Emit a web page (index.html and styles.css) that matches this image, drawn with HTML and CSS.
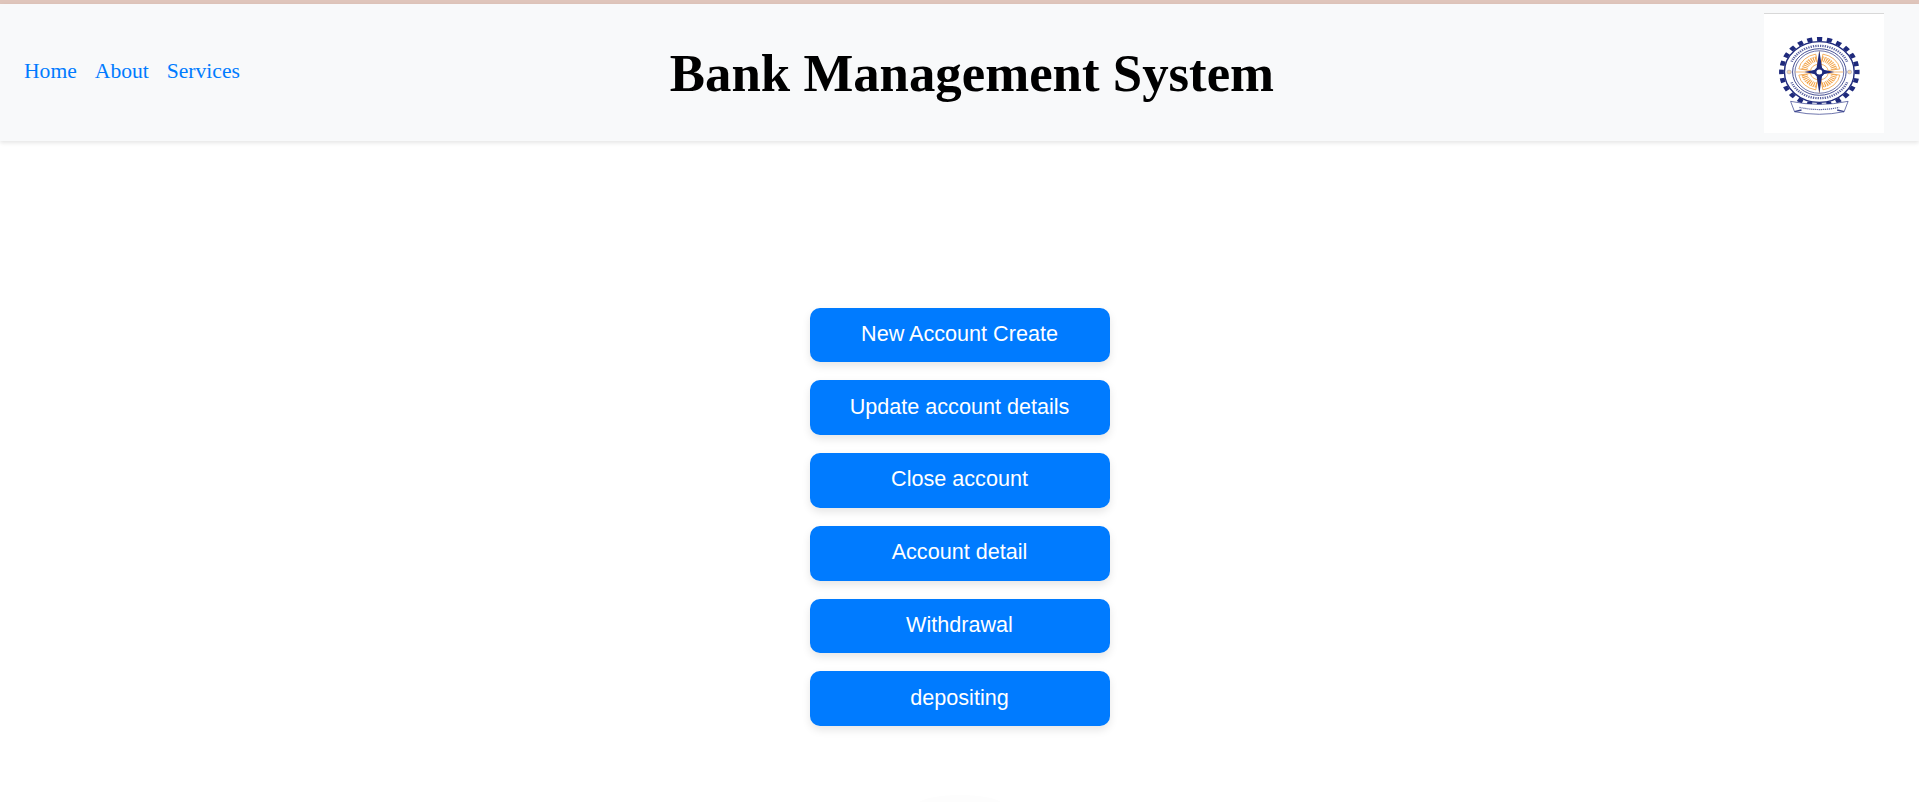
FILE: index.html
```html
<!DOCTYPE html>
<html lang="en">
<head>
    <meta charset="UTF-8">
    <meta name="viewport" content="width=device-width, initial-scale=1.0">
    <title>Bank Management System</title>
    <link rel="stylesheet" href="styles.css">
</head>
<body>
    <div class="top-strip"></div>
    <header class="site-header">
        <nav class="site-nav">
            <a href="#">Home</a>
            <a href="#">About</a>
            <a href="#">Services</a>
        </nav>
        <h1 class="site-title">Bank Management System</h1>
        <div class="logo-box">
            <svg class="logo" viewBox="0 0 120 120" width="120" height="119" aria-label="Institute logo">
                <defs>
                    <g id="fan" fill="none" stroke="#f2a144" stroke-width=".9">
                        <path d="M3.6 -20.7A21 21 0 0 1 20.7 -3.6"/>
                        <path d="M2.6 -14.8A15 15 0 0 1 14.8 -2.6" stroke-width="5.5" stroke-dasharray="1.1 1"/>
                        <path d="M3.1 -17.7A18 18 0 0 1 17.7 -3.1" stroke-dasharray="2 1"/>
                        <path d="M1.6 -8.9A9 9 0 0 1 8.9 -1.6"/>
                        <path d="M3.6 -20.7L1.6 -8.9M20.7 -3.6L8.9 -1.6"/>
                    </g>
                </defs>
                <g class="logo-art" transform="translate(55.3 58.5) scale(1 .87)">
                    <circle r="38.2" fill="none" stroke="#1f2a7c" stroke-width="4.8" stroke-dasharray="5.2 4.8" transform="rotate(-3.9)"/>
                    <circle r="35.2" fill="#fff" stroke="#1f2a7c" stroke-width="1.4"/>
                    <path d="M-28 -12A30.5 30.5 0 0 1 28 -12" fill="none" stroke="#5a62a0" stroke-width="2.6" stroke-dasharray="1.3 1.1"/>
                    <path d="M-28 12A30.5 30.5 0 0 0 28 12" fill="none" stroke="#5a62a0" stroke-width="2.6" stroke-dasharray="1.3 1.1"/>
                    <circle r="27" fill="none" stroke="#1f2a7c" stroke-width=".9"/>
                    <circle r="24.6" fill="none" stroke="#1f2a7c" stroke-width=".7"/>
                    <circle cx="-30.5" r="2.2" fill="#f8d9a8" stroke="#9aa0c8" stroke-width=".6"/>
                    <circle cx="30.5" r="2.2" fill="#f8d9a8" stroke="#9aa0c8" stroke-width=".6"/>
                    <use href="#fan"/>
                    <use href="#fan" transform="rotate(90)"/>
                    <use href="#fan" transform="rotate(180)"/>
                    <use href="#fan" transform="rotate(270)"/>
                    <path d="M-24 0H24M0 -24V24" stroke="#f2a144" stroke-width=".8"/>
                    <path d="M0 -25L3 -3L15 0L3 3L0 25L-3 3L-15 0L-3 -3Z" fill="#1f2a7c"/>
                    <circle r="5.4" fill="#1f2a7c"/>
                    <circle r="2.9" fill="#fff"/>
                    <path d="M-29 34L-25 46Q0 52 25 46L29 34Q0 41 -29 34Z" fill="#fff" stroke="#3d4690" stroke-width=".8"/>
                    <path d="M-20 41Q0 46 20 41" fill="none" stroke="#5a62a0" stroke-width="1.4" stroke-dasharray="1.2 .8"/>
                    <path d="M-25 46L-18 44M25 46L18 44" stroke="#3d4690" stroke-width="1.6"/>
                </g>
            </svg>
        </div>
    </header>
    <main class="menu">
        <a class="menu-btn" href="#">New Account Create</a>
        <a class="menu-btn" href="#">Update account details</a>
        <a class="menu-btn" href="#">Close account</a>
        <a class="menu-btn" href="#">Account detail</a>
        <a class="menu-btn" href="#">Withdrawal</a>
        <a class="menu-btn" href="#">depositing</a>
        <div class="menu-fade"></div>
    </main>
</body>
</html>
```

FILE: styles.css
```css
* {
    box-sizing: border-box;
}

body {
    margin: 0;
    background-color: #fff;
    font-family: "Liberation Serif", "Times New Roman", serif;
    overflow: hidden;
    height: 802px;
}

.top-strip {
    height: 4px;
    background-color: #dfc5bb;
}

.site-header {
    display: flex;
    align-items: center;
    height: 137px;
    padding: 0 35px 0 24px;
    background-color: #f8f9fa;
    box-shadow: 0 2px 4px rgba(0, 0, 0, 0.1);
}

.site-nav {
    display: flex;
    gap: 18px;
    margin-top: -3px;
}

.site-nav a {
    color: #007bff;
    font-size: 21.6px;
    text-decoration: none;
}

.site-title {
    flex: 1;
    margin: 0 60px 0 0;
    font-size: 52.8px;
    text-align: center;
    color: #000;
}

.logo-box {
    width: 120px;
    height: 120px;
    background-color: #fff;
    border-top: 1px solid #d8d8d8;
}

.logo {
    display: block;
}

.logo-art {
    filter: blur(0.4px);
}

.menu {
    display: flex;
    flex-direction: column;
    align-items: center;
    gap: 18px;
    padding-top: 166.5px;
}

.menu-btn {
    display: flex;
    align-items: center;
    justify-content: center;
    width: 300px;
    height: 54.8px;
    padding-bottom: 2px;
    background-color: #007bff;
    color: #fff;
    font-family: "Liberation Sans", Arial, sans-serif;
    font-size: 21.6px;
    text-decoration: none;
    border-radius: 10px;
    box-shadow: 0 4px 8px rgba(0, 0, 0, 0.1);
}

.menu-fade {
    width: 86px;
    height: 20px;
    margin-top: 51px;
    background-color: #fdfdfd;
    border-radius: 50% 50% 0 0;
}
```
